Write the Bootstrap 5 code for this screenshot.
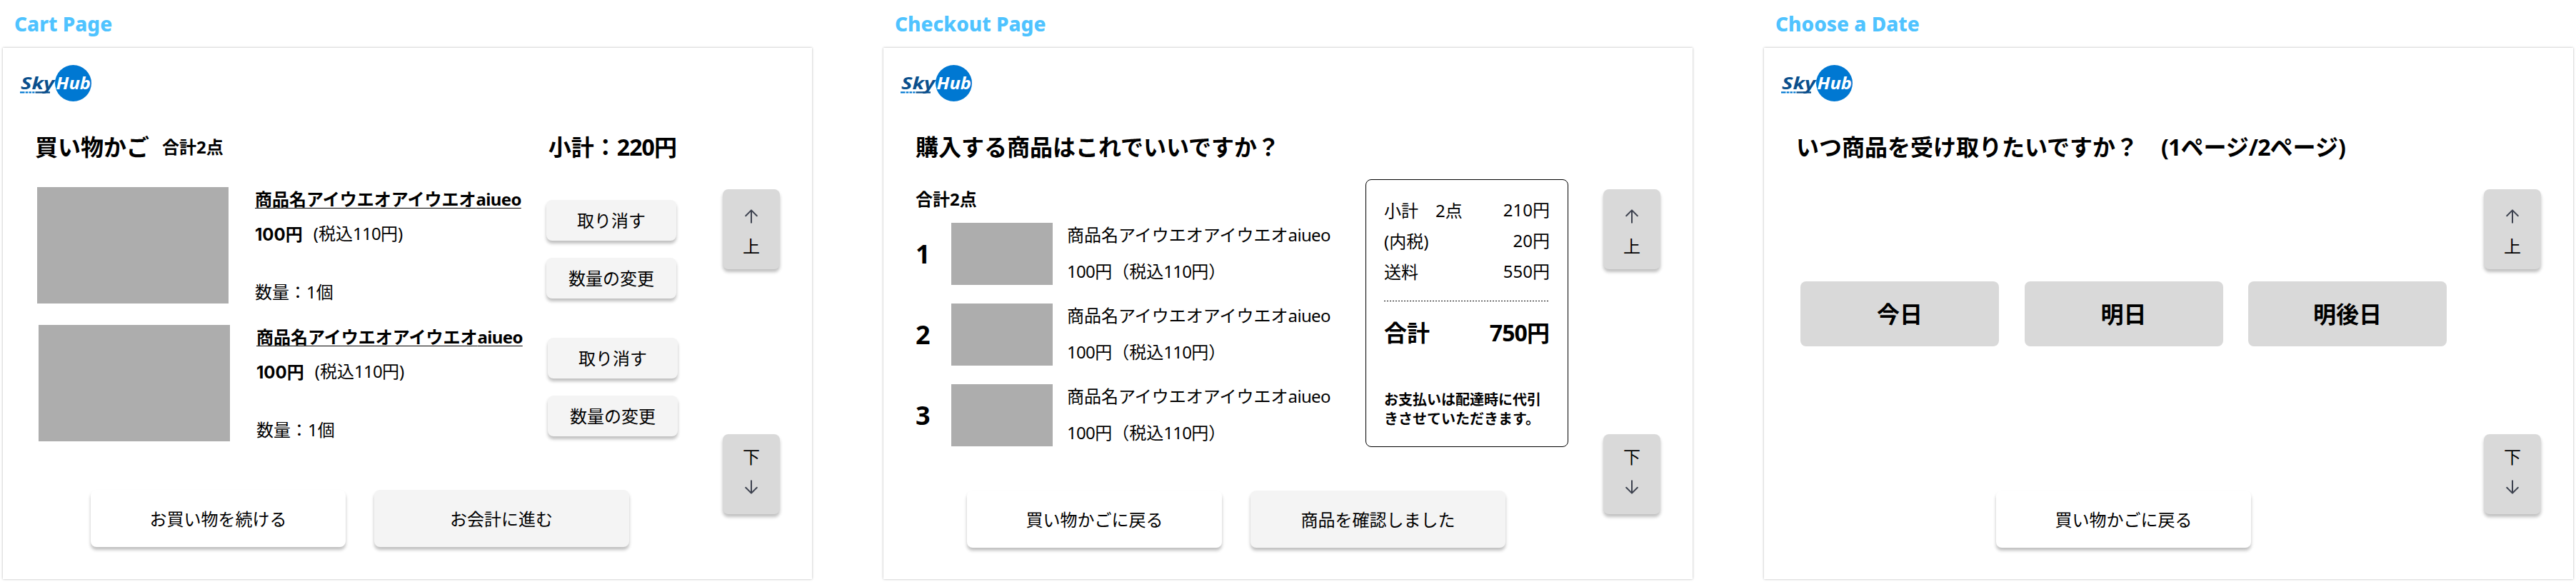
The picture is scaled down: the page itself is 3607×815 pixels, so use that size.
<!DOCTYPE html>
<html lang="ja">
<head>
<meta charset="utf-8">
<meta name="viewport" content="width=device-width, initial-scale=1">
<title>SkyHub</title>
<link href="https://cdn.jsdelivr.net/npm/bootstrap@5.3.0/dist/css/bootstrap.min.css" rel="stylesheet">
<style>
html,body{height:815px;overflow:hidden}
body{font-family:"Noto Sans","Noto Sans CJK JP",sans-serif;font-size:24px;line-height:33px;color:#000;background:#fff;white-space:nowrap}
.board{padding:14px 0 0 4px;gap:100px}
.screen{width:1133px}
.screen-title{font-size:28px;line-height:38px;font-weight:800;color:#4fc3ff;margin:0 0 15px 16px}
.frame{height:744px;background:#fff;box-shadow:0 0 3px rgba(0,0,0,.3)}
.main{width:1008px;flex:none}
.logo{display:block;margin:24px 0 0 24px}
.head-row{margin:42px 0 0 45px;width:899px;height:43px}
.head-row h1,.total{font-size:32px;line-height:43px;font-weight:700;margin:0}
.count{font-weight:700}
/* tighter Latin letters and digits inside Japanese text */
.lt{letter-spacing:-.028em}
.price-num{font-family:Inter,sans-serif;font-weight:700;line-height:1}
.tile{border:0;border-radius:8px;background:#f4f4f4;color:#000;font-size:24px;line-height:33px;padding:0;box-shadow:0 4px 4px rgba(0,0,0,.25)}
.tile-sm{width:182px;height:57px}
.tile-lg{width:357px;height:80px}
.tile-plain{background:#fff}
.day{width:278px;height:91px;border:0;border-radius:8px;background:#d9d9d9;color:#000;font-size:32px;line-height:43px;font-weight:700;padding:0}
.scroller{margin-top:198px;width:80px;height:455px}
.tile-nav{width:80px;height:112px;background:#d9d9d9}
.tile-nav svg{display:block}
.thumb{background:#adadad;flex:none}
.cart-item{height:163px;margin-left:48px}
.cart-item .thumb{width:268px}
.cart-item .info{width:408px;margin-left:37px}
.cart-item .acts{gap:24px;padding-top:18px}
.name{font-weight:700;text-decoration:underline;text-decoration-thickness:1px;text-underline-offset:3px}
.order{gap:26px;margin-top:17px}
.order .thumb{width:142px;height:87px}
.order .num{width:50px;font-size:36px;line-height:49px;font-weight:700}
.order .desc{margin-left:20px;gap:18px}
.summary{width:284px;height:375px;margin-top:24px;border:1px solid #000;border-radius:8px;padding:25px 25px 0}
.summary .line{height:34px;margin-bottom:9px}
.dash{height:1px;margin-top:24px;background:repeating-linear-gradient(90deg,#000 0 2px,transparent 2px 4px)}
.note{font-size:20px;line-height:27px;font-weight:700;white-space:normal;margin:59px 0 0}
</style>
</head>
<body>
<svg class="d-none">
  <symbol id="logo" viewBox="0 0 101 51">
    <circle cx="74.5" cy="25.5" r="25.5" fill="#0078d2"/>
    <g font-family="Open Sans,sans-serif" font-weight="700" font-style="italic" font-size="23.5">
      <text x="1" y="34.4" textLength="47" lengthAdjust="spacingAndGlyphs" fill="#0a4f8c">Sky</text>
      <text x="50.5" y="34.4" textLength="48.5" lengthAdjust="spacingAndGlyphs" fill="#fff">Hub</text>
    </g>
    <path d="M21.5 38.4H42" stroke="#0a4f8c" stroke-width="2.4"/>
    <path d="M0 38.4H6.5M7.7 38.4H11.3M12.5 38.4H16M17.2 38.4H20.4" stroke="#0078d2" stroke-width="2.4"/>
  </symbol>
  <symbol id="up" viewBox="0 0 24 24"><path d="M12 20.8V3.4M4.2 11.2L12 3.4l7.8 7.8" fill="none" stroke="#3d424f" stroke-width="2" stroke-linecap="round" stroke-linejoin="round"/></symbol>
  <symbol id="down" viewBox="0 0 24 24"><path d="M12 3.2v17.4M4.2 12.8l7.8 7.8 7.8-7.8" fill="none" stroke="#3d424f" stroke-width="2" stroke-linecap="round" stroke-linejoin="round"/></symbol>
</svg>

<div class="board d-flex">
  <section class="screen flex-shrink-0">
    <h2 class="screen-title">Cart Page</h2>
    <div class="frame d-flex">
      <div class="main">
        <svg class="logo" width="101" height="51"><use href="#logo"/></svg>
        <div class="head-row d-flex">
          <h1>買い物かご</h1>
          <span class="count" style="padding:5px 0 0 18px">合計2点</span>
          <h1 class="ms-auto">小計：<span class="lt">220</span>円</h1>
        </div>
        <div class="cart-item d-flex" style="margin-top:35px">
          <div class="thumb"></div>
          <div class="info d-flex flex-column align-items-start">
            <span class="name">商品名アイウエオアイウエオ<span class="lt">aiueo</span></span>
            <div class="d-flex align-items-start" style="margin-top:15px"><b style="margin-top:1px"><span class="price-num">100</span>円</b><span style="margin-left:15px">(税込<span class="lt">110</span>円)</span></div>
            <span class="mt-auto">数量：1個</span>
          </div>
          <div class="acts d-flex flex-column">
            <button class="btn tile tile-sm">取り消す</button>
            <button class="btn tile tile-sm">数量の変更</button>
          </div>
        </div>
        <div class="cart-item d-flex" style="margin-top:30px;margin-left:50px">
          <div class="thumb"></div>
          <div class="info d-flex flex-column align-items-start">
            <span class="name">商品名アイウエオアイウエオ<span class="lt">aiueo</span></span>
            <div class="d-flex align-items-start" style="margin-top:15px"><b style="margin-top:1px"><span class="price-num">100</span>円</b><span style="margin-left:15px">(税込<span class="lt">110</span>円)</span></div>
            <span class="mt-auto">数量：1個</span>
          </div>
          <div class="acts d-flex flex-column">
            <button class="btn tile tile-sm">取り消す</button>
            <button class="btn tile tile-sm">数量の変更</button>
          </div>
        </div>
        <div class="d-flex" style="margin:68px 0 0 123px;gap:39.5px">
          <button class="btn tile tile-lg tile-plain">お買い物を続ける</button>
          <button class="btn tile tile-lg">お会計に進む</button>
        </div>
      </div>
      <div class="scroller d-flex flex-column justify-content-between">
        <button class="btn tile tile-nav d-flex flex-column align-items-center" style="padding-top:26px"><svg width="24" height="24"><use href="#up"/></svg><span style="margin-top:13px">上</span></button>
        <button class="btn tile tile-nav d-flex flex-column align-items-center" style="padding-top:15px"><span>下</span><svg width="24" height="24" style="margin-top:14px"><use href="#down"/></svg></button>
      </div>
    </div>
  </section>

  <section class="screen flex-shrink-0">
    <h2 class="screen-title">Checkout Page</h2>
    <div class="frame d-flex">
      <div class="main">
        <svg class="logo" width="101" height="51"><use href="#logo"/></svg>
        <div class="head-row d-flex"><h1>購入する商品はこれでいいですか？</h1></div>
        <div class="d-flex">
          <div style="width:675px;padding:35px 0 0 45px">
            <div class="count">合計2点</div>
            <div class="order d-flex flex-column">
              <div class="d-flex"><div class="num align-self-center">1</div><div class="thumb"></div><div class="desc d-flex flex-column"><span>商品名アイウエオアイウエオ<span class="lt">aiueo</span></span><span><span class="lt">100</span>円（税込<span class="lt">110</span>円）</span></div></div>
              <div class="d-flex"><div class="num align-self-center">2</div><div class="thumb"></div><div class="desc d-flex flex-column"><span>商品名アイウエオアイウエオ<span class="lt">aiueo</span></span><span><span class="lt">100</span>円（税込<span class="lt">110</span>円）</span></div></div>
              <div class="d-flex"><div class="num align-self-center">3</div><div class="thumb"></div><div class="desc d-flex flex-column"><span>商品名アイウエオアイウエオ<span class="lt">aiueo</span></span><span><span class="lt">100</span>円（税込<span class="lt">110</span>円）</span></div></div>
            </div>
          </div>
          <div class="summary">
            <div class="line d-flex justify-content-between"><span class="align-self-end">小計　2点</span><span>210円</span></div>
            <div class="line d-flex justify-content-between"><span class="align-self-end">(内税)</span><span>20円</span></div>
            <div class="line d-flex justify-content-between mb-0"><span class="align-self-end">送料</span><span>550円</span></div>
            <div class="dash"></div>
            <div class="total d-flex justify-content-between" style="margin-top:22px"><span>合計</span><span><span class="lt">750</span>円</span></div>
            <p class="note">お支払いは配達時に代引きさせていただきます。</p>
          </div>
        </div>
        <div class="d-flex" style="margin:61px 0 0 117px;gap:40px">
          <button class="btn tile tile-lg tile-plain">買い物かごに戻る</button>
          <button class="btn tile tile-lg">商品を確認しました</button>
        </div>
      </div>
      <div class="scroller d-flex flex-column justify-content-between">
        <button class="btn tile tile-nav d-flex flex-column align-items-center" style="padding-top:26px"><svg width="24" height="24"><use href="#up"/></svg><span style="margin-top:13px">上</span></button>
        <button class="btn tile tile-nav d-flex flex-column align-items-center" style="padding-top:15px"><span>下</span><svg width="24" height="24" style="margin-top:14px"><use href="#down"/></svg></button>
      </div>
    </div>
  </section>

  <section class="screen flex-shrink-0">
    <h2 class="screen-title">Choose a Date</h2>
    <div class="frame d-flex">
      <div class="main">
        <svg class="logo" width="101" height="51"><use href="#logo"/></svg>
        <div class="head-row d-flex"><h1>いつ商品を受け取りたいですか？　<span class="lt">(1</span>ページ<span class="lt">/2</span>ページ)</h1></div>
        <div class="d-flex" style="margin:167px 0 0 51px;gap:35.5px">
          <button class="btn day">今日</button>
          <button class="btn day">明日</button>
          <button class="btn day">明後日</button>
        </div>
        <div class="d-flex" style="margin:202px 0 0 325px">
          <button class="btn tile tile-lg tile-plain">買い物かごに戻る</button>
        </div>
      </div>
      <div class="scroller d-flex flex-column justify-content-between">
        <button class="btn tile tile-nav d-flex flex-column align-items-center" style="padding-top:26px"><svg width="24" height="24"><use href="#up"/></svg><span style="margin-top:13px">上</span></button>
        <button class="btn tile tile-nav d-flex flex-column align-items-center" style="padding-top:15px"><span>下</span><svg width="24" height="24" style="margin-top:14px"><use href="#down"/></svg></button>
      </div>
    </div>
  </section>
</div>
<script src="https://cdn.jsdelivr.net/npm/bootstrap@5.3.0/dist/js/bootstrap.bundle.min.js"></script>
</body>
</html>
